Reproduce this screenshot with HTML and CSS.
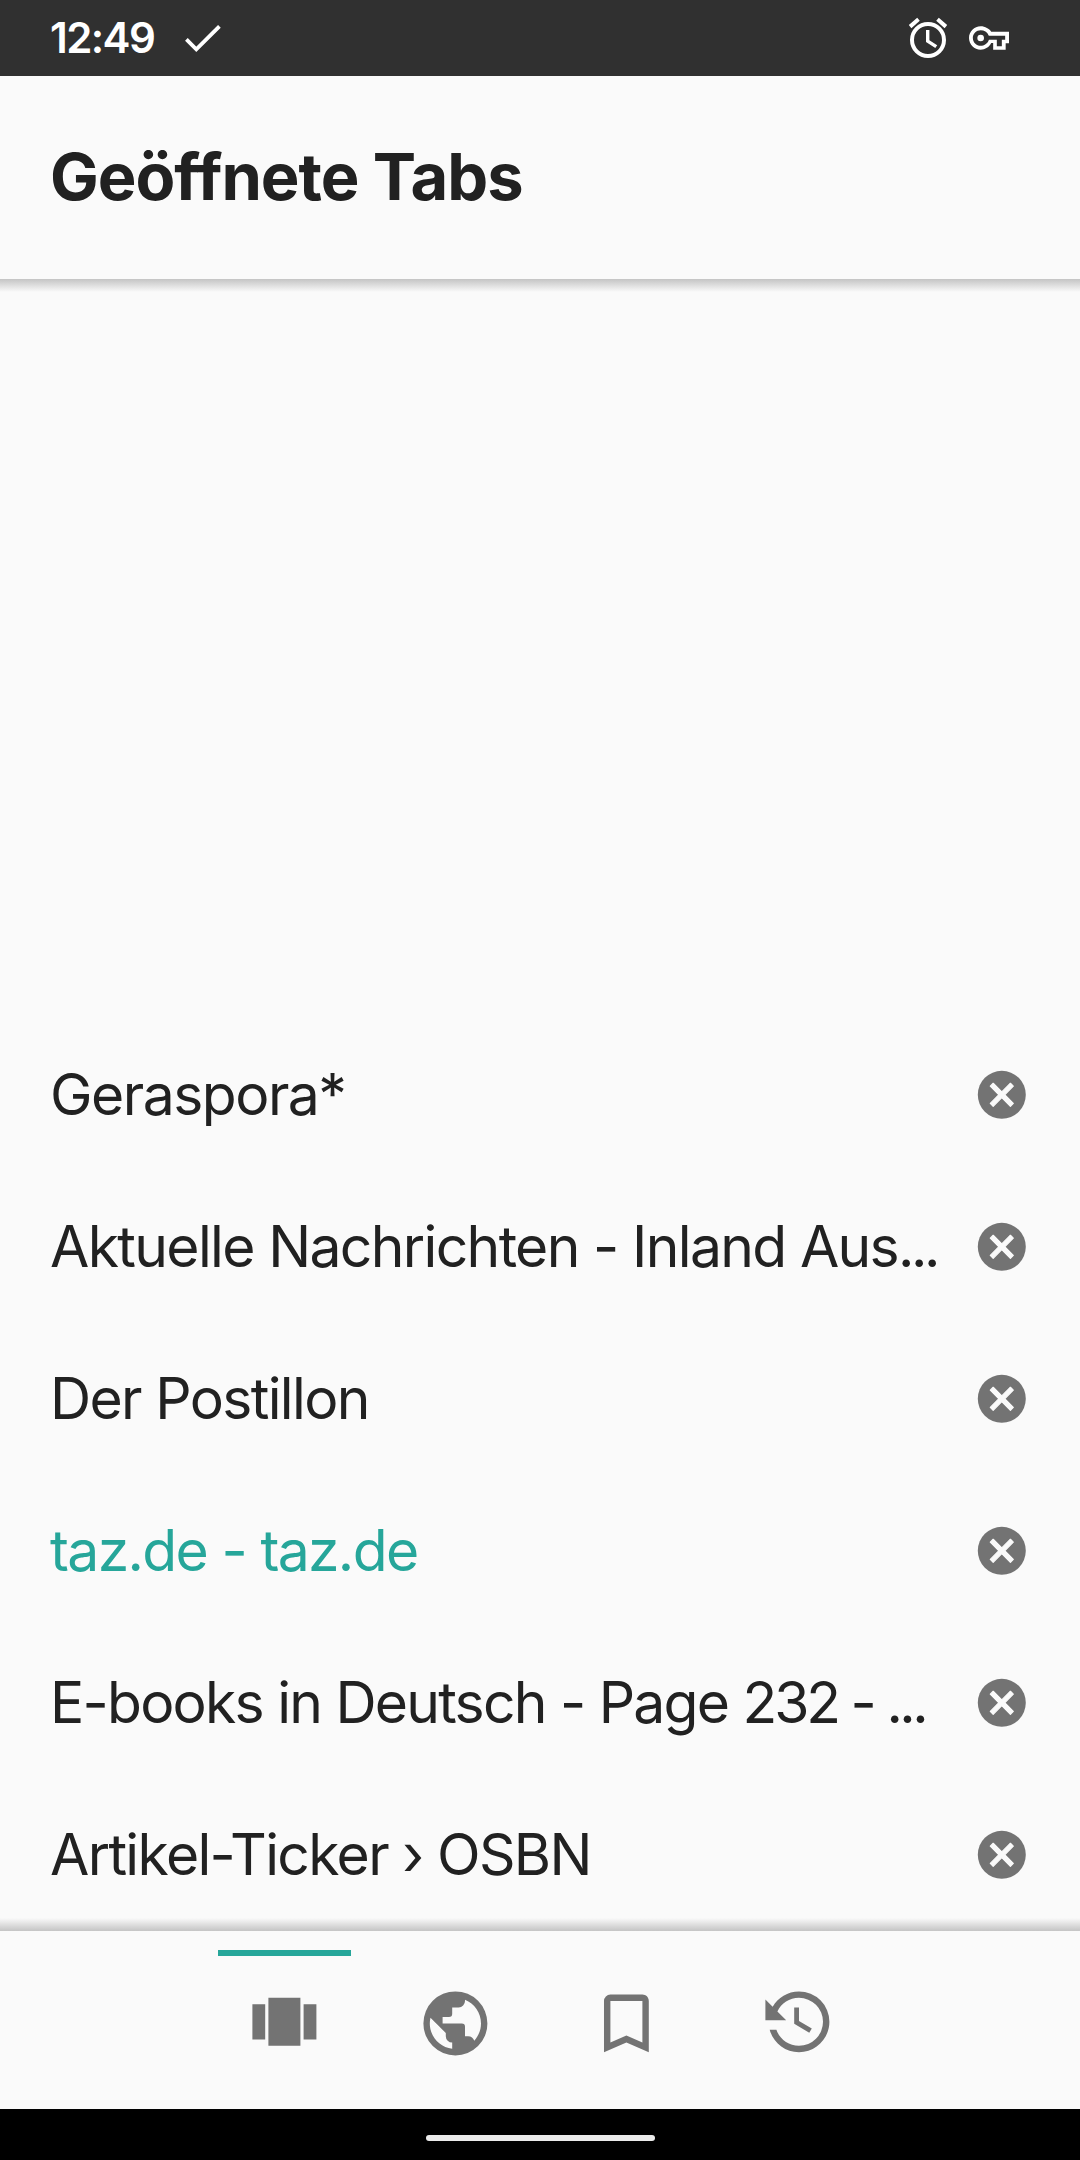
FILE: index.html
```html
<!DOCTYPE html>
<html lang="de">
<head>
<meta charset="utf-8">
<title>Geöffnete Tabs</title>
<link rel="stylesheet" href="styles.css">
</head>
<body>
<svg class="defs" width="0" height="0" aria-hidden="true">
  <symbol id="close" viewBox="0 0 24 24">
    <circle cx="12" cy="12" r="10"/>
    <path class="cross" d="M15.59 7.2 12 10.79 8.41 7.2 7.2 8.41 10.79 12 7.2 15.59 8.41 16.8 12 13.21 15.59 16.8 16.8 15.59 13.21 12 16.8 8.41Z"/>
  </symbol>
</svg>
<div class="screen">
  <div class="status">
    <span class="clock">12:49</span>
    <svg class="check" viewBox="0 0 36 28"><path d="M1.4 14.4 11.3 24.3 34.4 1.3"/></svg>
    <svg class="alarm" viewBox="0 0 24 24"><path d="M12,20A7,7 0 0,1 5,13A7,7 0 0,1 12,6A7,7 0 0,1 19,13A7,7 0 0,1 12,20M12,4A9,9 0 0,0 3,13A9,9 0 0,0 12,22A9,9 0 0,0 21,13A9,9 0 0,0 12,4M12.7,8H11V14L15.65,16.95L16.6,15.6L12.7,13.15V8M7.88,3.39L6.6,1.86L2.4,5.5L3.69,7.14L7.88,3.39M21.6,5.5L17.4,1.86L16.11,3.39L20.31,7.14L21.6,5.5Z"/></svg>
    <svg class="key" viewBox="0 0 24 24"><path d="M22 19h-7.5v-4h-1.18c-1.14 2.42-3.6 4-6.32 4-3.86 0-7-3.14-7-7s3.14-7 7-7c2.72 0 5.17 1.58 6.32 3.2H24v7h-2zm-5.3-2h3v-4h2v-2.4H11.94l-.23-.27C11.01 8.34 9.11 7.3 7 7.3c-2.6 0-4.7 2.1-4.7 4.7s2.1 4.7 4.7 4.7c2.11 0 4.01-1.34 4.71-3.03l.23-.67h4.76zM7 14a2 2 0 1 1 0-4 2 2 0 0 1 0 4z"/></svg>
  </div>
  <header class="header"><h1 class="title">Geöffnete Tabs</h1></header>
  <main class="tabs">
    <div class="tab"><span class="name">Geraspora*</span><svg class="close"><use href="#close"/></svg></div>
    <div class="tab"><span class="name snug">Aktuelle Nachrichten - Inland Aus<span class="dots">...</span></span><svg class="close"><use href="#close"/></svg></div>
    <div class="tab"><span class="name snug">Der Postillon</span><svg class="close"><use href="#close"/></svg></div>
    <div class="tab active"><span class="name snug">taz.de - taz.de</span><svg class="close"><use href="#close"/></svg></div>
    <div class="tab"><span class="name tight">E-books in Deutsch - Page <span class="digits">232 - </span><span class="dots">...</span></span><svg class="close"><use href="#close"/></svg></div>
    <div class="tab"><span class="name snug">Artikel-Ticker › OSBN</span><svg class="close"><use href="#close"/></svg></div>
  </main>
  <nav class="nav">
    <div class="item selected"><svg class="icon" viewBox="0 0 24 24"><path d="M18,6V17H22V6M2,17H6V6H2M7,19H17V4H7V19Z"/></svg></div>
    <div class="item"><svg class="icon" viewBox="0 0 24 24"><path d="M17.9,17.39C17.64,16.59 16.89,16 16,16H15V13A1,1 0 0,0 14,12H8V10H10A1,1 0 0,0 11,9V7H13A2,2 0 0,0 15,5V4.59C17.93,5.77 20,8.64 20,12C20,14.08 19.2,15.97 17.9,17.39M11,19.93C7.05,19.44 4,16.08 4,12C4,11.38 4.08,10.78 4.21,10.21L9,15V16A2,2 0 0,0 11,18M12,2A10,10 0 0,0 2,12A10,10 0 0,0 12,22A10,10 0 0,0 22,12A10,10 0 0,0 12,2Z"/></svg></div>
    <div class="item"><svg class="icon" viewBox="0 0 24 24"><path d="M17,18L12,15.82L7,18V5H17M17,3H7A2,2 0 0,0 5,5V21L12,18L19,21V5C19,3.89 18.1,3 17,3Z"/></svg></div>
    <div class="item"><svg class="icon" viewBox="0 0 24 24"><path d="M11,7V12.11L15.71,14.9L16.5,13.62L12.5,11.25V7M12.5,2C8.97,2 5.91,3.92 4.27,6.77L2,4.5V11H8.5L5.75,8.25C6.96,5.73 9.5,4 12.5,4A7.5,7.5 0 0,1 20,11.5A7.5,7.5 0 0,1 12.5,19C9.23,19 6.47,16.91 5.44,14H3.34C4.44,18.03 8.11,21 12.5,21C17.74,21 22,16.75 22,11.5A9.5,9.5 0 0,0 12.5,2Z"/></svg></div>
  </nav>
  <div class="gesture"><div class="pill"></div></div>
</div>
</body>
</html>
```
FILE: styles.css
```css
body {
  margin: 0;
  background: #fafafa;
  color: #212121;
  font-family: Inter, "Liberation Sans", sans-serif;
}
.defs { position: absolute; }
.screen {
  display: flex;
  flex-direction: column;
  width: 1080px;
  height: 2160px;
  overflow: hidden;
}
.status {
  display: flex;
  align-items: center;
  box-sizing: border-box;
  height: 76px;
  padding: 0 71px 0 50px;
  background: #303030;
  color: #fff;
}
.clock {
  width: 135px;
  font-size: 42px;
  font-weight: 600;
  line-height: 76px;
  letter-spacing: -1.6px;
  white-space: nowrap;
}
.check {
  width: 36px;
  height: 28px;
  margin-top: 1px;
  fill: none;
  stroke: #fff;
  stroke-width: 3.8;
}
.alarm { width: 48px; height: 48px; margin-left: auto; fill: #fff; }
.key { width: 40px; height: 40px; margin-left: 17px; fill: #fff; fill-rule: evenodd; }
.header {
  display: flex;
  align-items: center;
  height: 203px;
  padding-left: 50px;
}
.title {
  margin: 0;
  font-size: 65px;
  font-weight: 700;
  line-height: 78px;
  letter-spacing: -1px;
  white-space: nowrap;
  padding-bottom: 2px;
}
.tabs {
  flex: 1;
  display: flex;
  flex-direction: column;
  justify-content: flex-end;
  background:
    linear-gradient(#c4c4c4, #fafafa) top / 100% 13px no-repeat,
    linear-gradient(#fafafa, #c4c4c4) bottom / 100% 13px no-repeat;
}
.tab {
  display: flex;
  align-items: center;
  justify-content: space-between;
  height: 152px;
  padding: 0 49.5px 0 50px;
}
.name {
  font-size: 57px;
  line-height: 76px;
  letter-spacing: -1.5px;
  white-space: nowrap;
}
.snug { letter-spacing: -1.65px; }
.tight { letter-spacing: -1.75px; }
.digits { letter-spacing: -3.2px; }
.dots { letter-spacing: -3.5px; }
.active .name { color: #26a69a; }
.close {
  flex: none;
  width: 57.6px;
  height: 57.6px;
  fill: #737373;
}
.cross {
  fill: #fafafa;
  stroke: #fafafa;
  stroke-width: 0.5;
  stroke-linejoin: round;
}
.nav {
  display: flex;
  justify-content: center;
  height: 178px;
  padding-left: 1px;
}
.item {
  display: flex;
  flex-direction: column;
  align-items: center;
  width: 171px;
  padding-top: 19px;
}
.item::before {
  content: "";
  width: 133px;
  height: 6px;
  margin-bottom: 28.6px;
}
.selected::before { background: #26a69a; }
.icon { width: 76.8px; height: 76.8px; fill: #737373; }
.gesture {
  display: flex;
  justify-content: center;
  height: 51px;
  background: #000;
}
.pill {
  width: 229px;
  height: 6px;
  margin-top: 26px;
  border-radius: 3px;
  background: #ebebeb;
}
```
